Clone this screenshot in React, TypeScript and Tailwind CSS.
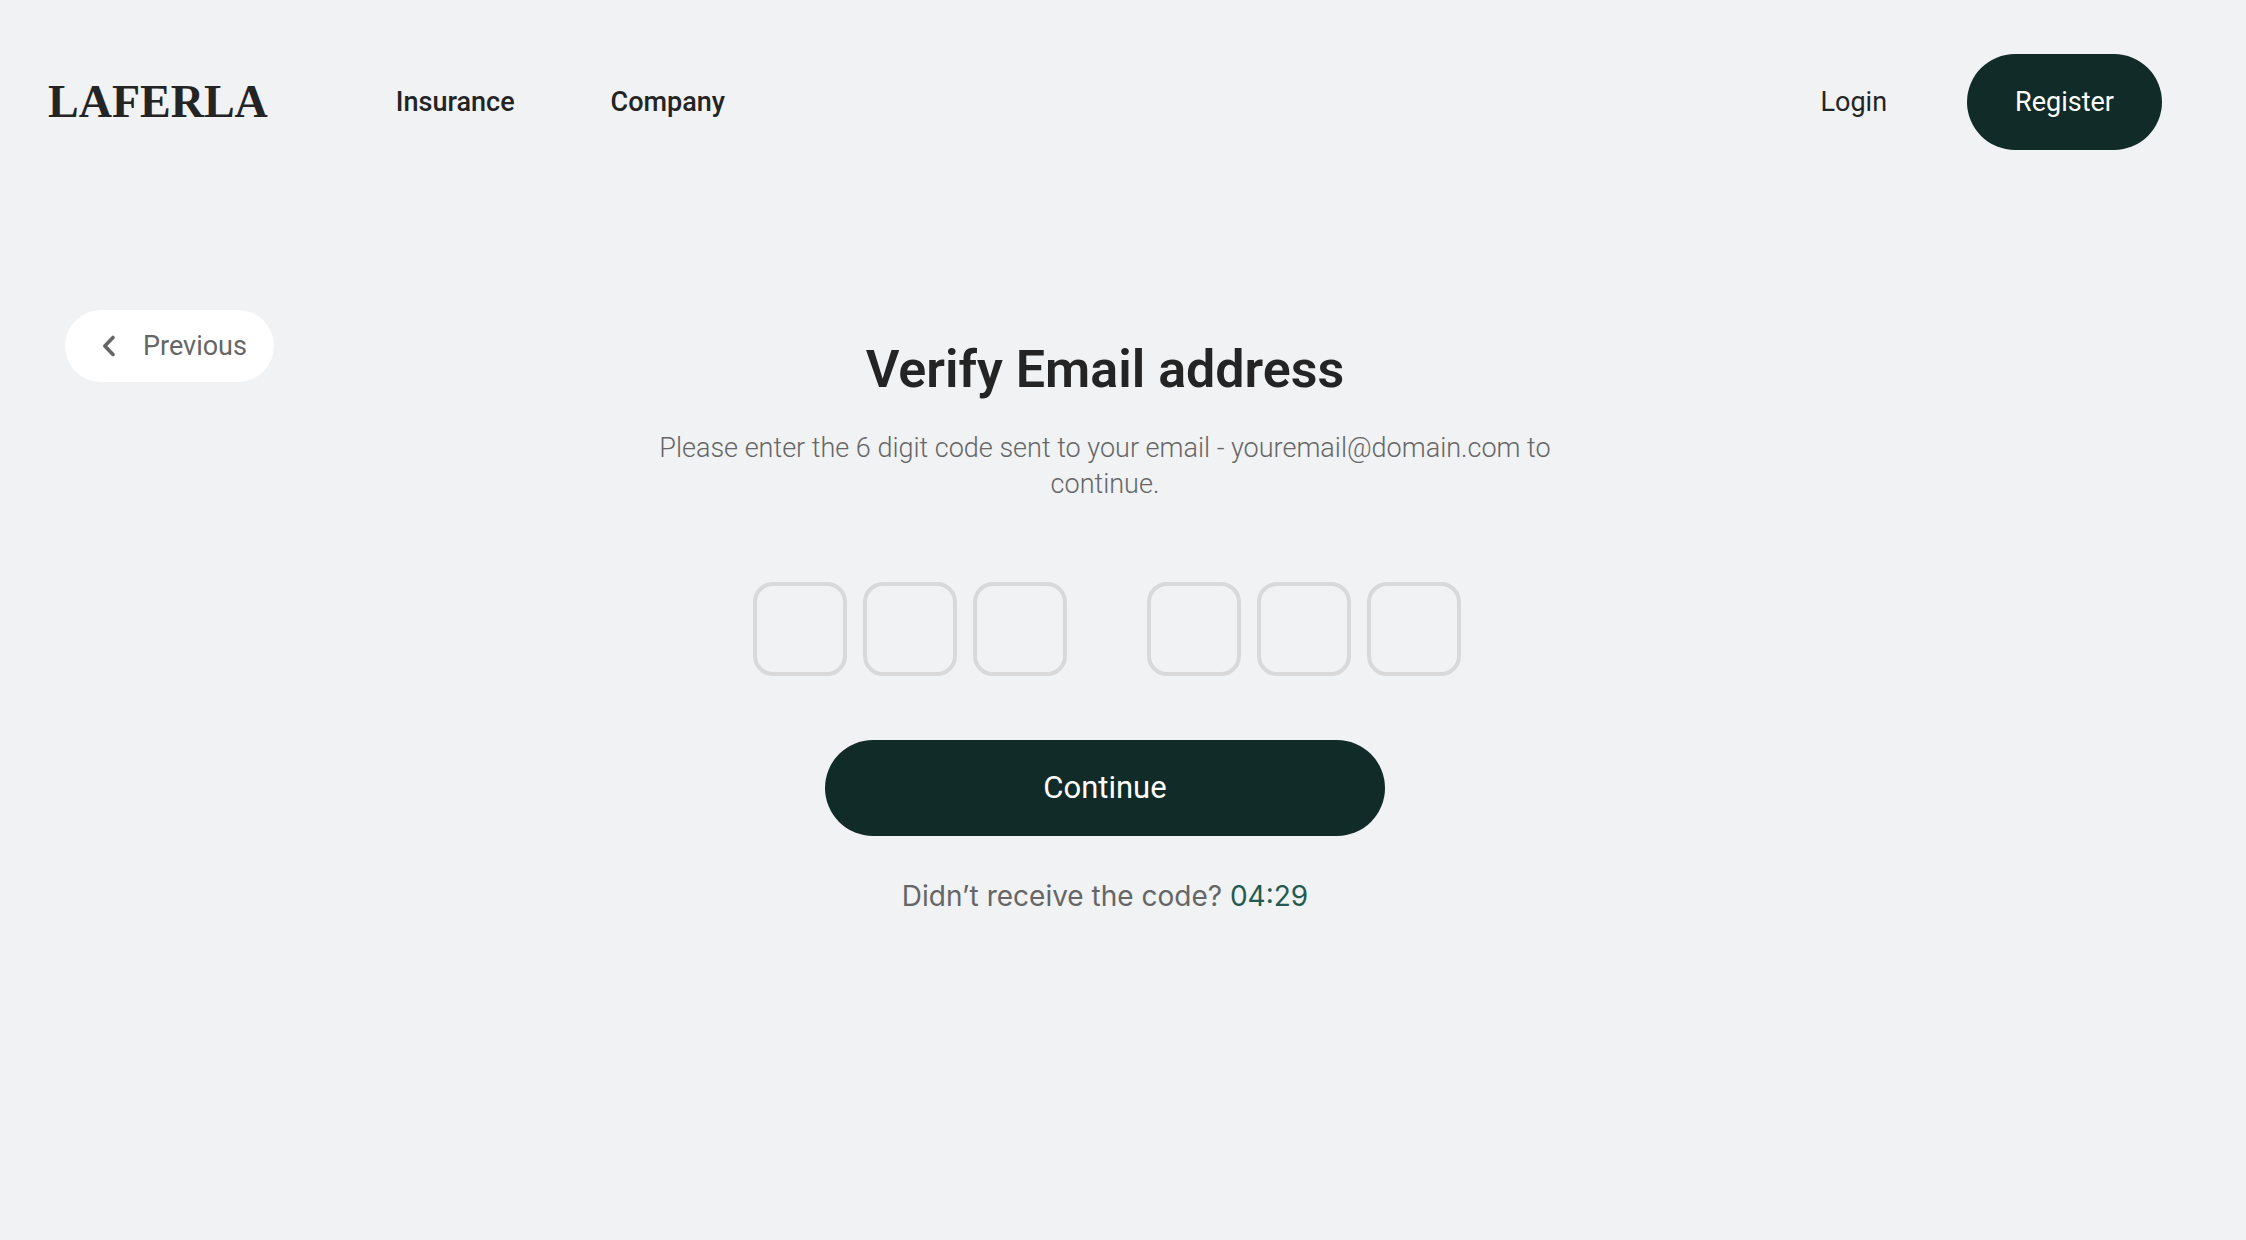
import { useRef, useState } from "react";

const CODE_GROUPS = [
  [0, 1, 2],
  [3, 4, 5],
];

function Header() {
  return (
    <header className="flex items-center px-12">
      <a href="#" className="font-['Liberation_Serif',serif] text-[46px] leading-[48px] font-bold">
        LAFERLA
      </a>
      <nav className="ml-32 flex gap-24 font-medium">
        <a href="#">Insurance</a>
        <a href="#">Company</a>
      </nav>
      <div className="ml-auto flex items-center gap-20">
        <a href="#">Login</a>
        <button type="button" className="h-24 rounded-[48px] bg-[#112b28] px-12 text-white">
          Register
        </button>
      </div>
    </header>
  );
}

function CodeInput() {
  const [digits, setDigits] = useState(["", "", "", "", "", ""]);
  const inputs = useRef<(HTMLInputElement | null)[]>([]);

  const handleChange = (index: number, value: string) => {
    const digit = value.replace(/\D/g, "").slice(-1);
    setDigits((prev) => prev.map((d, i) => (i === index ? digit : d)));
    if (digit) inputs.current[index + 1]?.focus();
  };

  return (
    <div className="flex gap-20 pl-1">
      {CODE_GROUPS.map((group) => (
        <div key={group[0]} className="flex gap-4">
          {group.map((index) => (
            <input
              key={index}
              ref={(el) => {
                inputs.current[index] = el;
              }}
              type="text"
              inputMode="numeric"
              aria-label={`Digit ${index + 1}`}
              value={digits[index]}
              onChange={(e) => handleChange(index, e.target.value)}
              className="size-[94px] rounded-[20px] border-4 border-[#d9d9d9] bg-transparent text-center text-4xl outline-none focus:border-[#112b28]"
            />
          ))}
        </div>
      ))}
    </div>
  );
}

export default function App() {
  return (
    <div className="min-h-screen bg-[#f0f2f4] pt-[54px] pr-9 font-[Roboto,sans-serif] text-[27px] leading-9 text-[#242424]">
      <Header />

      <main className="mt-40">
        {/* zero height so the form stays level with the back button */}
        <div className="flex h-0 pl-[65px]">
          <button
            type="button"
            className="flex h-[72px] items-center gap-6 rounded-[36px] bg-white pr-[27px] pl-[34px] text-[#666]"
          >
            <svg viewBox="0 0 20 24" className="h-6 w-5" fill="none" stroke="currentColor" strokeWidth="3.6" strokeLinecap="round" strokeLinejoin="round">
              <path d="M14 3.5 5.8 12l8.2 8.5" />
            </svg>
            Previous
          </button>
        </div>

        <form onSubmit={(e) => e.preventDefault()} className="flex flex-col items-center pt-7">
          <h1 className="text-[52px] leading-[64px] font-semibold">Verify Email address</h1>
          <p className="mt-7 max-w-[900px] text-center font-light text-[#666]">
            Please enter the 6 digit code sent to your email - youremail@domain.com to continue.
          </p>
          <div className="mt-20">
            <CodeInput />
          </div>
          <button type="submit" className="mt-16 h-24 w-[560px] rounded-[48px] bg-[#112b28] text-[31px] text-white">
            Continue
          </button>
          <p className="mt-[42px] font-[Inter,sans-serif] text-[28px] text-[#666]">
            Didn’t receive the code? <span className="text-[#235b50]">04:29</span>
          </p>
        </form>
      </main>
    </div>
  );
}
